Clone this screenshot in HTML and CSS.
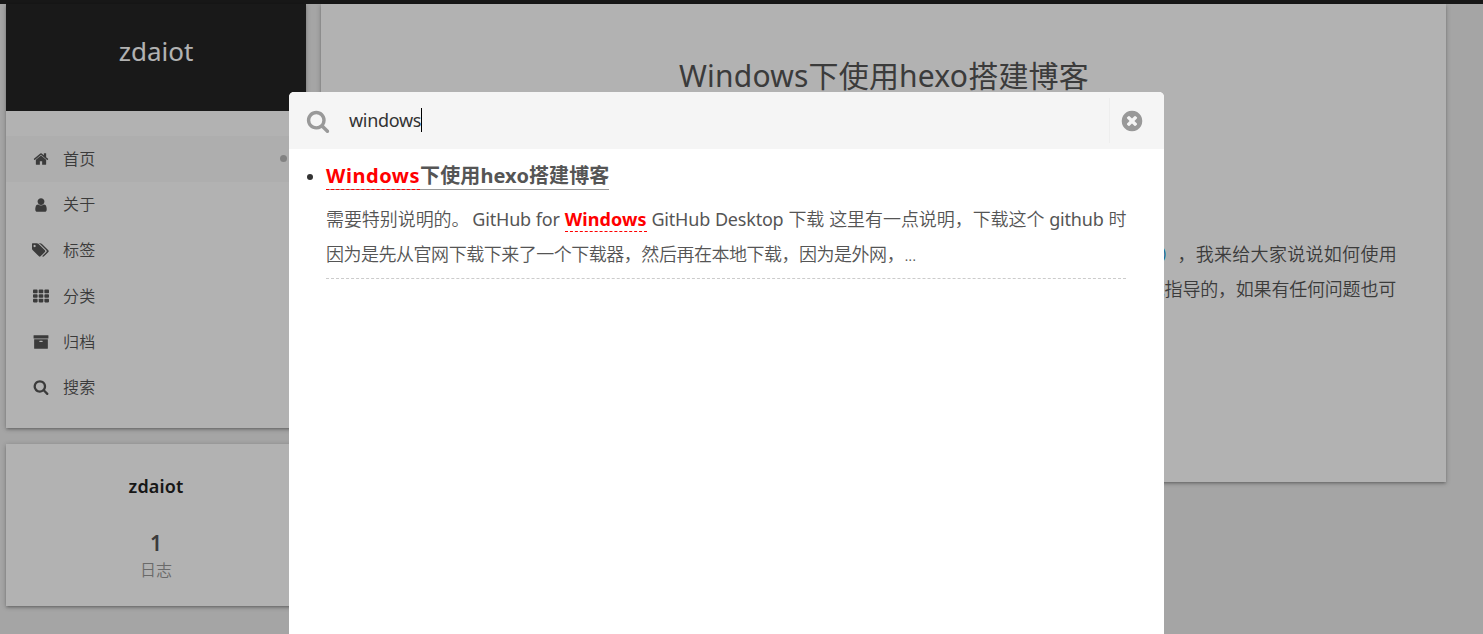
FILE: index.html
```
<!DOCTYPE html>
<html lang="zh-CN">
<head>
<meta charset="utf-8">
<title>zdaiot</title>
<link rel="stylesheet" href="styles.css">
</head>
<body>
<div class="headband"></div>
<div class="page">
  <aside class="sidebar">
    <div class="card">
      <div class="brand">zdaiot</div>
      <nav class="menu">
        <a class="item active"><svg class="icon" viewBox="0 0 1792 1792"><path d="M1472 992v480q0 26-19 45t-45 19h-384v-384h-256v384h-384q-26 0-45-19t-19-45v-480q0-1 .5-3t.5-3l575-474 575 474q1 2 1 6zm223-69l-62 74q-8 9-21 11h-3q-13 0-21-7l-692-577-692 577q-12 8-24 7-13-2-21-11l-62-74q-8-10-7-23.5t11-21.5l719-599q32-26 76-26t76 26l244 204v-195q0-14 9-23t23-9h192q14 0 23 9t9 23v408l219 182q10 8 11 21.5t-7 23.5z"/></svg><span>首页</span><i class="dot"></i></a>
        <a class="item"><svg class="icon" viewBox="0 0 1792 1792"><path d="M1536 1399q0 109-62.5 187t-150.5 78h-854q-88 0-150.5-78t-62.5-187q0-85 8.5-160.5t31.5-152 58.5-131 94-89 134.5-34.5q131 128 313 128t313-128q76 0 134.5 34.5t94 89 58.5 131 31.5 152 8.5 160.5zm-256-887q0 159-112.5 271.5t-271.5 112.5-271.5-112.5-112.5-271.5 112.5-271.5 271.5-112.5 271.5 112.5 112.5 271.5z"/></svg><span>关于</span></a>
        <a class="item"><svg class="icon tags" viewBox="0 0 1835 1792"><path d="M384 448q0-53-37.5-90.5t-90.5-37.5-90.5 37.5-37.5 90.5 37.5 90.5 90.5 37.5 90.5-37.5 37.5-90.5zm1067 576q0 53-37 90l-491 492q-39 37-91 37-53 0-90-37l-715-716q-38-37-64.5-101t-26.5-117v-416q0-52 38-90t90-38h416q53 0 117 26.5t102 64.5l715 714q37 39 37 91zm384 0q0 53-37 90l-491 492q-39 37-91 37-36 0-59-14t-53-45l470-470q37-37 37-90 0-52-37-91l-715-714q-38-38-102-64.5t-117-26.5h224q53 0 117 26.5t102 64.5l715 714q37 39 37 91z"/></svg><span>标签</span></a>
        <a class="item"><svg class="icon" viewBox="0 0 16 16"><g><rect x="0" y="1.6" width="4.6" height="3.6" rx=".8"/><rect x="5.7" y="1.6" width="4.6" height="3.6" rx=".8"/><rect x="11.4" y="1.6" width="4.6" height="3.6" rx=".8"/><rect x="0" y="6.2" width="4.6" height="3.6" rx=".8"/><rect x="5.7" y="6.2" width="4.6" height="3.6" rx=".8"/><rect x="11.4" y="6.2" width="4.6" height="3.6" rx=".8"/><rect x="0" y="10.8" width="4.6" height="3.6" rx=".8"/><rect x="5.7" y="10.8" width="4.6" height="3.6" rx=".8"/><rect x="11.4" y="10.8" width="4.6" height="3.6" rx=".8"/></g></svg><span>分类</span></a>
        <a class="item"><svg class="icon" viewBox="0 0 1792 1792"><path d="M1088 832q0-26-19-45t-45-19h-256q-26 0-45 19t-19 45 19 45 45 19h256q26 0 45-19t19-45zm576-192v960q0 26-19 45t-45 19h-1408q-26 0-45-19t-19-45v-960q0-26 19-45t45-19h1408q26 0 45 19t19 45zm64-448v256q0 26-19 45t-45 19h-1536q-26 0-45-19t-19-45v-256q0-26 19-45t45-19h1536q26 0 45 19t19 45z"/></svg><span>归档</span></a>
        <a class="item"><svg class="icon" viewBox="0 0 1792 1792"><path d="M1216 832q0-185-131.5-316.5t-316.5-131.5-316.5 131.5-131.5 316.5 131.5 316.5 316.5 131.5 316.5-131.5 131.5-316.5zm512 832q0 52-38 90t-90 38q-54 0-90-38l-343-342q-179 124-399 124-143 0-273.5-55.5t-225-150-150-225-55.5-273.5 55.5-273.5 150-225 225-150 273.5-55.5 273.5 55.5 225 150 150 225 55.5 273.5q0 220-124 399l343 343q37 37 37 90z"/></svg><span>搜索</span></a>
      </nav>
    </div>
    <div class="card author">
      <div class="author-name">zdaiot</div>
      <div class="count">1</div>
      <div class="count-label">日志</div>
    </div>
  </aside>
  <main class="post">
    <h1 class="post-title">Windows下使用hexo搭建博客</h1>
    <div class="post-body">
      <p class="line first"><span class="link">）</span>，我来给大家说说如何使用</p>
      <p class="line second">我指导的，如果有任何问题也可</p>
    </div>
  </main>
</div>
<div class="overlay"></div>
<section class="popup">
  <header class="search">
    <svg class="search-icon" viewBox="0 0 1792 1792"><path d="M1216 832q0-185-131.5-316.5t-316.5-131.5-316.5 131.5-131.5 316.5 131.5 316.5 316.5 131.5 316.5-131.5 131.5-316.5zm512 832q0 52-38 90t-90 38q-54 0-90-38l-343-342q-179 124-399 124-143 0-273.5-55.5t-225-150-150-225-55.5-273.5 55.5-273.5 150-225 225-150 273.5-55.5 273.5 55.5 225 150 150 225 55.5 273.5q0 220-124 399l343 343q37 37 37 90z"/></svg>
    <div class="query"><span class="query-text">windows</span><i class="caret"></i></div>
    <div class="close"><svg class="close-icon" viewBox="0 0 1792 1792"><path d="M1277 1122q0-26-19-45l-181-181 181-181q19-19 19-45 0-27-19-46l-90-90q-19-19-46-19-26 0-45 19l-181 181-181-181q-19-19-45-19-27 0-46 19l-90 90q-19 19-19 46 0 26 19 45l181 181-181 181q-19 19-19 45 0 27 19 46l90 90q19 19 46 19 26 0 45-19l181-181 181 181q19 19 45 19 27 0 46-19l90-90q19-19 19-46zm387-226q0 209-103 385.5t-279.5 279.5-385.5 103-385.5-103-279.5-279.5-103-385.5 103-385.5 279.5-279.5 385.5-103 385.5 103 279.5 279.5 103 385.5z"/></svg></div>
  </header>
  <div class="result">
    <i class="bullet"></i>
    <div class="result-main">
      <div class="result-head"><a class="result-title"><b class="hit">Windows</b>下使用hexo搭建博客</a></div>
      <div class="excerpt">
        <div class="row one"><span class="han">需要特别说明的。</span> GitHub for <b class="hit">Windows</b> GitHub Desktop <span class="han">下载</span> <span class="han">这里有一点说明，下载这个</span> github <span class="han">时</span></div>
        <div class="row two han">因为是先从官网下载下来了一个下载器，然后再在本地下载，因为是外网，...</div>
      </div>
    </div>
  </div>
</section>
</body>
</html>
```
FILE: styles.css
```
* { box-sizing: border-box; }
body {
  margin: 0;
  height: 634px;
  overflow: hidden;
  position: relative;
  background: #ececec;
  color: #555;
  font-family: "Noto Sans", "Noto Sans CJK SC", sans-serif;
  text-spacing-trim: space-all;
}
.headband { height: 4px; background: #222; }
.page { display: flex; align-items: flex-start; gap: 15px; padding-left: 6px; }
.sidebar { width: 300px; display: flex; flex-direction: column; gap: 16px; }
.card, .post {
  background: #fff;
  box-shadow: 0 2px 2px 0 rgba(0,0,0,.12), 0 3px 1px -2px rgba(0,0,0,.06), 0 1px 5px 0 rgba(0,0,0,.24);
}
.card { height: 424px; }
.brand {
  height: 107px;
  line-height: 94px;
  background: #242424;
  color: #fff;
  font-size: 26px;
  text-align: center;
}
.menu { padding-top: 25px; font-size: 16px; font-weight: 350; }
.item { display: flex; align-items: center; height: 45.7px; padding: 0 19px 0 27.3px; color: #555; }
.item.active { background: #f9f9f9; }
.item span { margin: -.2px 0 0 13.7px; line-height: 24px; flex: 1; letter-spacing: .2px; }
.icon { width: 16px; height: 16px; fill: #555; }
.icon.tags { width: 17px; margin-left: -1px; }
.dot { width: 7px; height: 7px; border-radius: 50%; background: #bbb; }
.author { height: 162px; text-align: center; padding-top: 29px; }
.author-name { font-size: 18px; font-weight: 600; line-height: 26px; color: #222; letter-spacing: .15px; }
.count { margin-top: 29px; font-size: 21px; line-height: 30px; font-weight: 600; }
.count-label { font-size: 16px; line-height: 24px; color: #999; font-weight: 350; }
.post { width: 1125px; height: 478px; padding: 49px 49px 0; }
.post-title { margin: 0; padding-left: 1px; font-size: 30px; line-height: 46px; font-weight: 400; text-align: center; letter-spacing: .2px; }
.post-body { padding-top: 138px; font-size: 18px; font-weight: 350; line-height: 35px; }
.line { margin: 0; text-align: right; white-space: nowrap; }
.first { letter-spacing: .3px; }
.second { letter-spacing: -.2px; padding-right: 1px; }
.link { color: #0593d3; margin-right: -1px; }
.overlay { position: absolute; inset: 0; background: rgba(0,0,0,.3); }
.popup {
  position: absolute;
  left: 289px;
  top: 92px;
  width: 875px;
  height: 542px;
  background: #fff;
  border-radius: 5px 5px 0 0;
  overflow: hidden;
}
.search { display: flex; align-items: center; height: 57px; padding-left: 17px; background: #f5f5f5; }
.search-icon { width: 24px; height: 24px; fill: #999; }
.query { flex: 1; display: flex; align-items: center; padding-left: 19px; font-size: 18px; color: #333; }
.query-text { letter-spacing: -.3px; margin-top: -2px; }
.caret { width: 1px; height: 24px; margin-top: -2px; background: #000; }
.close { width: 55px; height: 45px; border-left: 1px solid #eee; display: flex; align-items: center; padding-left: 10px; }
.close-icon { width: 24px; height: 24px; fill: #999; }
.result { display: flex; padding: 11px 38px 0 18px; }
.bullet { width: 6px; height: 6px; margin: 14px 13px 0 0; border-radius: 50%; background: #333; }
.result-main { width: 800px; }
.result-head { height: 42px; }
.result-title { display: inline-block; height: 30px; line-height: 32px; font-size: 20px; font-weight: 700; border-bottom: 1px solid #999; white-space: nowrap; letter-spacing: .1px; }
.hit { color: #f00; border-bottom: 1px dashed #f00; font-weight: 700; }
.result-title .hit { display: inline-block; height: 30px; letter-spacing: .55px; }
.excerpt { height: 77px; border-bottom: 1px dashed #ccc; font-size: 18px; line-height: 35px; }
.row { white-space: nowrap; }
.row.one { text-align: justify; text-align-last: justify; white-space: normal; letter-spacing: -.2px; height: 35px; }
.row.one .hit { letter-spacing: .1px; }
.row .han, .row.two { letter-spacing: -.48px; font-weight: 350; }
.row.one .han:first-child { margin-right: -2px; }
```
